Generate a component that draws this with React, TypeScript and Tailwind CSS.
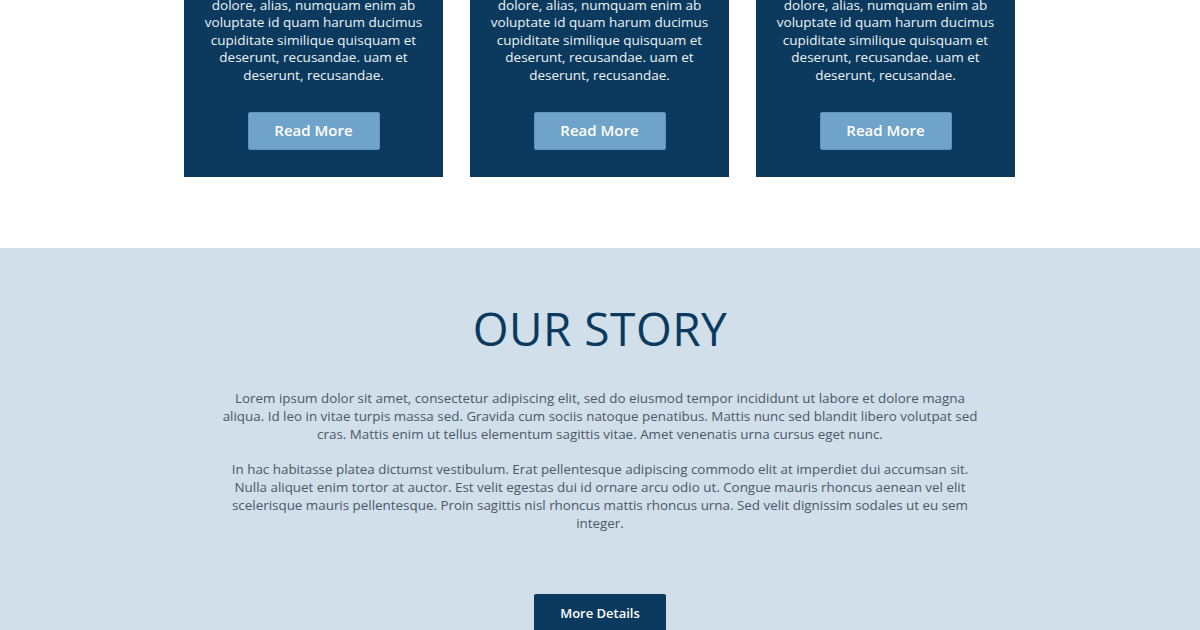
import React from 'react';

const cardLines = [
  'sit amet, numquam aliquid quos',
  'dolore, alias, numquam enim ab',
  'voluptate id quam harum ducimus',
  'cupiditate similique quisquam et',
  'deserunt, recusandae. uam et',
  'deserunt, recusandae.',
];

const Card = () => (
  <div className="w-[259px] bg-[#0b3a5e] px-3 pb-[27px] flex flex-col items-center">
    <div className="text-[13.5px] leading-[17.6px] text-[#eef3f7] text-center">
      {cardLines.map((line, i) => (
        <p key={i} className="whitespace-nowrap">{line}</p>
      ))}
    </div>
    <button className="mt-[27px] w-[132px] h-[38px] bg-[#6fa3c9] text-white text-[15px] font-semibold rounded-[2px] border border-[#5f93b9]">
      Read More
    </button>
  </div>
);

export default function App() {
  return (
    <div className="w-[1200px] h-[630px] overflow-hidden bg-white font-['Open_Sans',sans-serif]">
      <div className="flex justify-center gap-[27px] -mt-[21px] pr-px">
        <Card />
        <Card />
        <Card />
      </div>

      <section className="mt-[71px] bg-[#d1dfea] flex flex-col items-center pt-[52px] pb-16">
        <h2 className="text-[46px] leading-[56px] text-[#0b3a5e] tracking-[0.5px]">OUR STORY</h2>
        <div className="mt-[33px] w-[760px] text-center text-[13.4px] leading-[18px] text-[#4a5868]">
          <p>
            Lorem ipsum dolor sit amet, consectetur adipiscing elit, sed do eiusmod tempor incididunt ut labore et dolore magna aliqua. Id leo in vitae turpis massa sed. Gravida cum sociis natoque penatibus. Mattis nunc sed blandit libero volutpat sed cras. Mattis enim ut tellus elementum sagittis vitae. Amet venenatis urna cursus eget nunc.
          </p>
          <p className="mt-[17px]">
            In hac habitasse platea dictumst vestibulum. Erat pellentesque adipiscing commodo elit at imperdiet dui accumsan sit. Nulla aliquet enim tortor at auctor. Est velit egestas dui id ornare arcu odio ut. Congue mauris rhoncus aenean vel elit scelerisque mauris pellentesque. Proin sagittis nisl rhoncus mattis rhoncus urna. Sed velit dignissim sodales ut eu sem integer.
          </p>
        </div>
        <button className="mt-[62px] w-[132px] h-[40px] bg-[#0b3a5e] text-white text-[13px] font-semibold rounded-[2px]">
          More Details
        </button>
      </section>
    </div>
  );
}
